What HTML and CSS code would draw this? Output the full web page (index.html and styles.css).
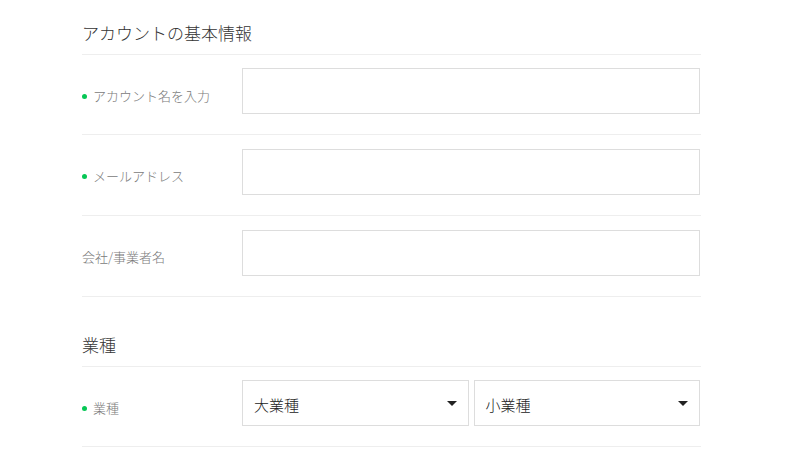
FILE: index.html
```html
<!DOCTYPE html>
<html lang="ja">
<head>
<meta charset="utf-8">
<link rel="stylesheet" href="styles.css">
</head>
<body>
<div class="form">
  <h2 class="section-title first">アカウントの基本情報</h2>
  <div class="row">
    <div class="label required">アカウント名を入力</div>
    <div class="field"><div class="input"></div></div>
  </div>
  <div class="row">
    <div class="label required">メールアドレス</div>
    <div class="field"><div class="input"></div></div>
  </div>
  <div class="row">
    <div class="label">会社/事業者名</div>
    <div class="field"><div class="input"></div></div>
  </div>

  <h2 class="section-title">業種</h2>
  <div class="row">
    <div class="label required">業種</div>
    <div class="field selects">
      <div class="select"><span>大業種</span><i class="caret"></i></div>
      <div class="select"><span>小業種</span><i class="caret"></i></div>
    </div>
  </div>
</div>
</body>
</html>
```

FILE: styles.css
```css
html, body {
  margin: 0;
  padding: 0;
  background: #fff;
}
body {
  font-family: "Noto Sans CJK JP", "Noto Sans", sans-serif;
  font-weight: 300;
  color: #333;
}
.form {
  margin-left: 82px;
  width: 619px;
}
.section-title {
  display: block;
  box-sizing: content-box;
  height: 24px;
  margin: 36px 0 0;
  padding: 0 0 9px;
  font-size: 17px;
  line-height: 24px;
  font-weight: 300;
  color: #333;
  border-bottom: 1px solid #eeeeee;
  overflow: hidden;
}
.section-title.first {
  margin-top: 0;
  padding-top: 21px;
}
.section-title + .row {
  padding-top: 13px;
}
.row {
  display: flex;
  align-items: center;
  height: 46px;
  box-sizing: content-box;
  padding: 14px 0 20px;
  border-bottom: 1px solid #eeeeee;
}
.section-title + .row .label {
  padding-top: 9px;
}
.label {
  width: 160px;
  flex: none;
  font-size: 13px;
  line-height: 20px;
  color: #7a7a7a;
  padding-top: 7px;
  display: flex;
  align-items: center;
}
.label.required::before {
  content: "";
  width: 5px;
  height: 5px;
  border-radius: 50%;
  background: #06c755;
  margin-right: 6px;
  margin-top: 1px;
}
.field {
  flex: 1;
  margin-right: 1px;
}
.input {
  height: 44px;
  border: 1px solid #dddddd;
}
.selects {
  display: grid;
  grid-template-columns: 1fr 1fr;
  gap: 5px;
}
.select {
  border: 1px solid #dddddd;
  display: flex;
  align-items: center;
  justify-content: space-between;
  padding: 2px 11px 0 11px;
  box-sizing: border-box;
  height: 46px;
  font-size: 15px;
  color: #222;
}
.caret {
  width: 0;
  height: 0;
  border-left: 5px solid transparent;
  border-right: 5px solid transparent;
  border-top: 5px solid #222;
  margin-top: -1px;
}
```
